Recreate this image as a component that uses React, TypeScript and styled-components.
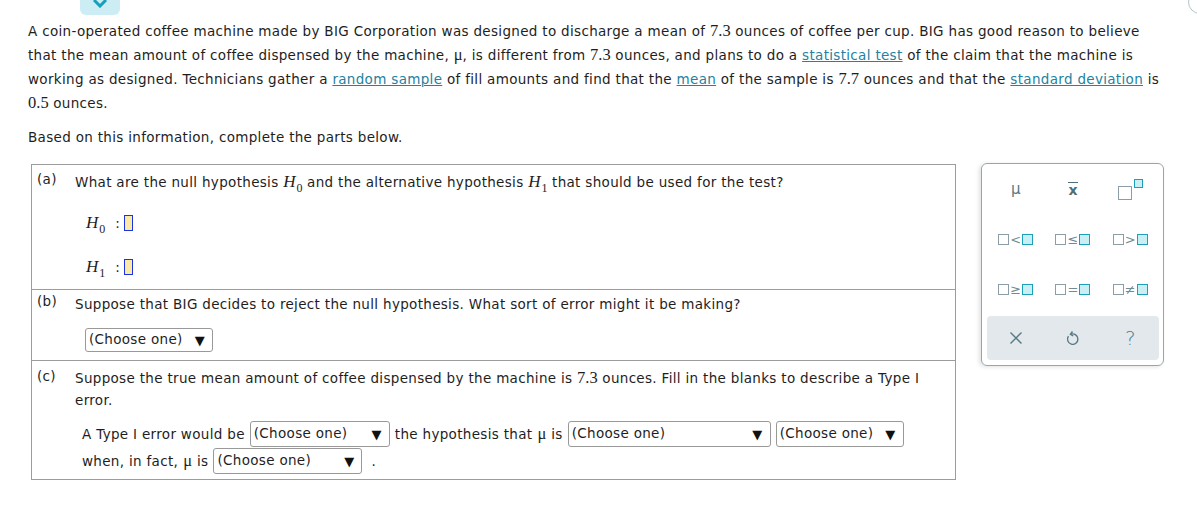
import React from "react";
import styled, { createGlobalStyle } from "styled-components";

const Global = createGlobalStyle`
  html, body { margin: 0; padding: 0; background: #fff; }
  body {
    font-family: "DejaVu Sans", Verdana, sans-serif;
    font-size: 13.5px;
    letter-spacing: 0.32px;
    color: #1e1e1e;
    overflow: hidden;
  }
`;

const Page = styled.div`
  position: relative;
  width: 1197px;
  height: 516px;
  overflow: hidden;
`;

const TopBar = styled.div`
  height: 15px;
  display: flex;
  padding-left: 80px;
`;

const Tab = styled.div`
  width: 40px;
  height: 15px;
  background: #ccedf3;
  border-radius: 0 0 6px 6px;
  display: flex;
  justify-content: center;
  align-items: flex-start;
`;

const Corner = styled.div`
  position: absolute;
  top: -10px;
  right: -15px;
  width: 24px;
  height: 24px;
  box-sizing: border-box;
  border: 1.5px solid #b4c3ca;
  border-radius: 50%;
`;

const Para = styled.p`
  margin: 4px 0 0 28px;
  line-height: 24px;
  white-space: nowrap;
`;

const Intro = styled.p`
  margin: 10px 0 0 28px;
  line-height: 24px;
  white-space: nowrap;
`;

const Num = styled.span`
  font-family: "Liberation Serif", "DejaVu Serif", serif;
  font-size: 16.5px;
  letter-spacing: 0;
  line-height: 0;
`;

const Link = styled.a`
  color: #23829f;
  text-decoration: underline;
  cursor: pointer;
`;

const Var = styled.span`
  font-family: "Liberation Serif", "DejaVu Serif", serif;
  font-style: italic;
  font-size: 17px;
  letter-spacing: 0;
  line-height: 0;
  white-space: nowrap;
`;

const Sub = styled.span`
  font-style: normal;
  font-size: 12px;
  line-height: 0;
  position: relative;
  top: 5px;
  margin-left: 1px;
`;

const Main = styled.div`
  display: flex;
  align-items: flex-start;
  gap: 25px;
  margin: 15px 0 0 31px;
`;

const QuestionBox = styled.div`
  width: 925px;
  box-sizing: border-box;
  border: 1px solid #9c9c9c;
`;

const Section = styled.div<{ $pt: number; $pb: number; $first?: boolean }>`
  display: flex;
  align-items: flex-start;
  padding: ${(p) => p.$pt}px 0 ${(p) => p.$pb}px 5px;
  border-top: ${(p) => (p.$first ? "none" : "1px solid #9c9c9c")};
`;

const PartLabel = styled.div`
  width: 38px;
  flex: none;
  line-height: 18px;
`;

const PartBody = styled.div<{ $lh: number }>`
  flex: 1;
  line-height: ${(p) => p.$lh}px;
`;

const HRow = styled.div<{ $mt: number }>`
  display: flex;
  align-items: center;
  height: 28px;
  margin: ${(p) => p.$mt}px 0 0 11px;
`;

const Colon = styled.span`
  margin: 0 4px 0 10px;
`;

const AnswerSlot = styled.span`
  display: inline-block;
  width: 7px;
  height: 14px;
  background: #fde9a6;
  border: 1px solid #1b34e0;
`;

const SelectBox = styled.div<{ $w: number; $h: number }>`
  display: inline-flex;
  align-items: center;
  justify-content: space-between;
  box-sizing: border-box;
  width: ${(p) => p.$w}px;
  height: ${(p) => p.$h}px;
  border: 1px solid #999;
  border-radius: 3px;
  padding: 0 7px 0 3px;
  line-height: 1;
  background: #fff;
`;

const Arrow = styled.span`
  font-size: 13px;
  color: #111;
`;

const BRow = styled.div`
  margin: 12px 0 0 10px;
  height: 24px;
  display: flex;
`;

const FillRows = styled.div`
  margin: 10px 0 0 7px;
  display: flex;
  flex-direction: column;
  gap: 1px;
`;

const FillRow = styled.div`
  display: flex;
  align-items: center;
  height: 26px;
  gap: 5px;
  white-space: nowrap;
`;

const Dot = styled.span`
  margin-left: 4px;
`;

const Palette = styled.div`
  width: 183px;
  height: 203px;
  margin-top: -1px;
  box-sizing: border-box;
  border: 1px solid #90a8b0;
  border-radius: 6px;
  box-shadow: -2px 1px 4px rgba(0, 0, 0, 0.12);
  padding: 0 4px 5px 5px;
  display: flex;
  flex-direction: column;
  letter-spacing: 0;
`;

const KeyGrid = styled.div`
  display: grid;
  grid-template-columns: repeat(3, 1fr);
  grid-auto-rows: 50px;
`;

const Key = styled.div`
  display: flex;
  align-items: center;
  justify-content: center;
  color: #557a84;
`;

const ActionBar = styled.div`
  margin-top: 2px;
  height: 44px;
  border-radius: 4px;
  background: #e2e8eb;
  display: grid;
  grid-template-columns: repeat(3, 1fr);
`;

const Mu = styled.span`
  font-family: "DejaVu Sans", sans-serif;
  font-size: 15px;
  color: #557a84;
`;

const XBar = styled.span`
  font-family: "DejaVu Sans", sans-serif;
  font-weight: bold;
  font-size: 14px;
  color: #4d6f79;
  border-top: 1.5px solid #4d6f79;
  line-height: 12px;
  padding-top: 1px;
`;

const Sq = styled.span<{ $teal?: boolean; $size: number }>`
  display: inline-block;
  box-sizing: border-box;
  width: ${(p) => p.$size}px;
  height: ${(p) => p.$size}px;
  border: 1.5px solid ${(p) => (p.$teal ? "#1e9fb9" : "#8b9ea5")};
  background: ${(p) => (p.$teal ? "#c9eef4" : "#fff")};
`;

const Rel = styled.span`
  display: inline-flex;
  align-items: center;
  gap: 1px;
`;

const Sym = styled.span`
  font-family: "DejaVu Sans", sans-serif;
  font-size: 13px;
  color: #6f8c95;
  width: 11px;
  text-align: center;
  line-height: 1;
`;

const PowerKey = styled.span`
  display: inline-flex;
  align-items: flex-start;
  gap: 2px;
`;

const PowerBase = styled.span`
  margin-top: 7px;
  display: inline-flex;
`;

const Question = styled.span`
  font-family: "DejaVu Sans", sans-serif;
  font-size: 20px;
  font-weight: 300;
  color: #557a84;
`;

const Choose = ({ w, h = 26 }: { w: number; h?: number }) => (
  <SelectBox $w={w} $h={h}>
    <span>(Choose one)</span>
    <Arrow>▼</Arrow>
  </SelectBox>
);

const H = ({ n }: { n: number }) => (
  <Var>
    H<Sub>{n}</Sub>
  </Var>
);

const Relation = ({ s }: { s: string }) => (
  <Rel>
    <Sq $size={11} />
    <Sym>{s}</Sym>
    <Sq $size={11} $teal />
  </Rel>
);

export default function App() {
  return (
    <Page>
      <Global />
      <Corner />
      <TopBar>
        <Tab>
          <svg width="16" height="8" viewBox="0 0 16 8">
            <path d="M2 0 L8 6 L14 0" fill="none" stroke="#17a0bd" strokeWidth="3" />
          </svg>
        </Tab>
      </TopBar>
      <Para>
        A coin-operated coffee machine made by BIG Corporation was designed to discharge a mean of <Num>7.3</Num> ounces of coffee per cup. BIG has good reason to believe
        <br />
        that the mean amount of coffee dispensed by the machine, <Num>μ</Num>, is different from <Num>7.3</Num> ounces, and plans to do a{" "}
        <Link>statistical test</Link> of the claim that the machine is
        <br />
        working as designed. Technicians gather a <Link>random sample</Link> of fill amounts and find that the <Link>mean</Link> of the sample is{" "}
        <Num>7.7</Num> ounces and that the <Link>standard deviation</Link> is
        <br />
        <Num>0.5</Num> ounces.
      </Para>
      <Intro>Based on this information, complete the parts below.</Intro>
      <Main>
        <QuestionBox>
          <Section $pt={5} $pb={8} $first>
            <PartLabel>(a)</PartLabel>
            <PartBody $lh={24}>
              <div>
                What are the null hypothesis <H n={0} /> and the alternative hypothesis <H n={1} /> that should be used for the test?
              </div>
              <HRow $mt={15}>
                <H n={0} />
                <Colon>:</Colon>
                <AnswerSlot />
              </HRow>
              <HRow $mt={16}>
                <H n={1} />
                <Colon>:</Colon>
                <AnswerSlot />
              </HRow>
            </PartBody>
          </Section>
          <Section $pt={2} $pb={8}>
            <PartLabel>(b)</PartLabel>
            <PartBody $lh={24}>
              <div>Suppose that BIG decides to reject the null hypothesis. What sort of error might it be making?</div>
              <BRow>
                <Choose w={128} h={24} />
              </BRow>
            </PartBody>
          </Section>
          <Section $pt={6} $pb={5}>
            <PartLabel>(c)</PartLabel>
            <PartBody $lh={22}>
              <div>
                Suppose the true mean amount of coffee dispensed by the machine is <Num>7.3</Num> ounces. Fill in the blanks to describe a Type I
                <br />
                error.
              </div>
              <FillRows>
                <FillRow>
                  A Type I error would be <Choose w={140} /> the hypothesis that <Num>μ</Num> is <Choose w={203} />
                  <Choose w={128} />
                </FillRow>
                <FillRow>
                  when, in fact, <Num>μ</Num> is <Choose w={149} />
                  <Dot>.</Dot>
                </FillRow>
              </FillRows>
            </PartBody>
          </Section>
        </QuestionBox>
        <Palette>
          <KeyGrid>
            <Key>
              <Mu>μ</Mu>
            </Key>
            <Key>
              <XBar>x</XBar>
            </Key>
            <Key>
              <PowerKey>
                <PowerBase>
                  <Sq $size={14} />
                </PowerBase>
                <Sq $size={9} $teal />
              </PowerKey>
            </Key>
            <Key>
              <Relation s="<" />
            </Key>
            <Key>
              <Relation s="≤" />
            </Key>
            <Key>
              <Relation s=">" />
            </Key>
            <Key>
              <Relation s="≥" />
            </Key>
            <Key>
              <Relation s="=" />
            </Key>
            <Key>
              <Relation s="≠" />
            </Key>
          </KeyGrid>
          <ActionBar>
            <Key>
              <svg width="14" height="14" viewBox="0 0 14 14">
                <path d="M1.5 1.5 L12.5 12.5 M12.5 1.5 L1.5 12.5" stroke="#557a84" strokeWidth="1.4" fill="none" />
              </svg>
            </Key>
            <Key>
              <svg width="16" height="17" viewBox="0 0 16 17">
                <path d="M6 4.2 A5.2 5.2 0 1 1 3.4 6.2" stroke="#557a84" strokeWidth="1.4" fill="none" />
                <path d="M7.5 1.5 L5.4 4.3 L8.2 6" stroke="#557a84" strokeWidth="1.4" fill="none" />
              </svg>
            </Key>
            <Key>
              <Question>?</Question>
            </Key>
          </ActionBar>
        </Palette>
      </Main>
    </Page>
  );
}
